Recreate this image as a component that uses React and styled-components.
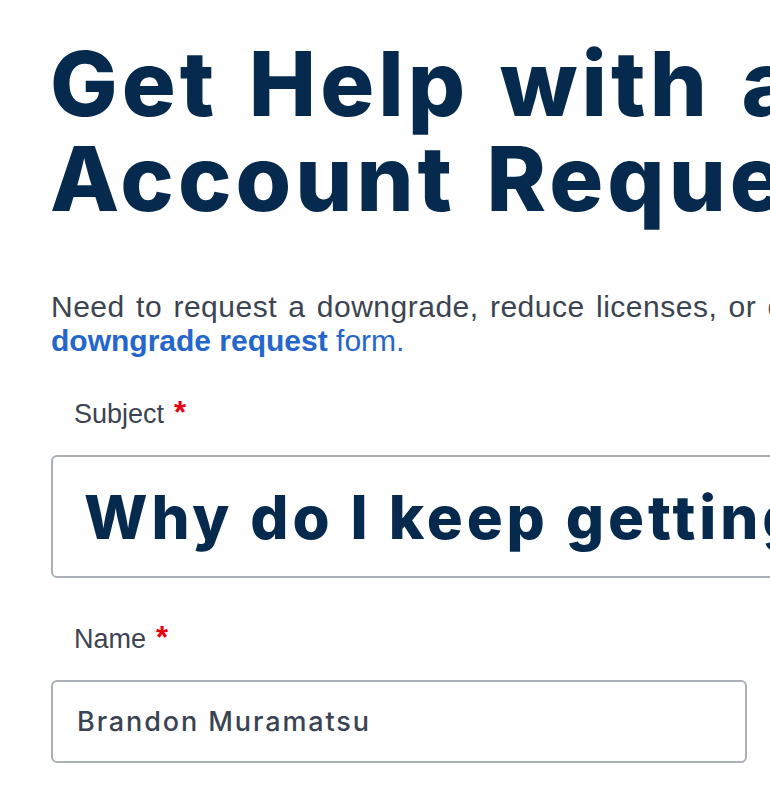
import React from "react";
import styled, { createGlobalStyle } from "styled-components";

const GlobalStyle = createGlobalStyle`
  html, body {
    margin: 0;
    padding: 0;
    background: #ffffff;
    overflow: hidden;
  }
`;

const Page = styled.div`
  width: 1300px;
  padding: 36px 0 0 50px;
  box-sizing: border-box;
`;

const Title = styled.h1`
  margin: 0;
  font-family: Inter, "Noto Sans", sans-serif;
  font-weight: 800;
  font-size: 90px;
  line-height: 95px;
  letter-spacing: 4px;
  word-spacing: 7px;
  color: #062a4d;
  white-space: nowrap;
`;

const Intro = styled.p`
  margin: 64px 0 0 1px;
  font-family: "Liberation Sans", Arial, sans-serif;
  font-size: 30px;
  line-height: 34px;
  color: #3c4451;
  white-space: nowrap;
`;

/* first line of the intro runs a little wider than the second in the original */
const StretchedLine = styled.span`
  letter-spacing: 0.5px;
  word-spacing: 2.5px;
`;

const Link = styled.a`
  color: #2566cc;
  text-decoration: none;
  font-weight: ${(p) => (p.$strong ? 700 : 400)};
`;

const Field = styled.div`
  display: flex;
  flex-direction: column;
  margin-top: ${(p) => p.$top}px;
`;

const Label = styled.label`
  padding-left: 24px;
  font-family: "Liberation Sans", Arial, sans-serif;
  font-size: 27px;
  line-height: 30px;
  color: #3c4451;
`;

const Required = styled.span`
  color: #e8000d;
  margin-left: 10px;
  font-size: 31px;
  font-weight: 700;
`;

const Input = styled.input`
  box-sizing: border-box;
  margin-top: ${(p) => p.$gap}px;
  margin-left: 1px;
  width: ${(p) => p.$width}px;
  height: ${(p) => p.$height}px;
  padding: 0 ${(p) => p.$pad}px;
  border: 2px solid #aaaeb5;
  border-radius: 6px;
  background: #ffffff;
  outline: none;
  font-family: Inter, "Noto Sans", sans-serif;
  font-weight: ${(p) => p.$weight};
  font-size: ${(p) => p.$size}px;
  letter-spacing: ${(p) => p.$track}px;
  color: ${(p) => p.$color};
`;

export default function App() {
  return (
    <>
      <GlobalStyle />
      <Page>
        <Title>
          Get Help with an
          <br />
          Account Request
        </Title>
        <Intro>
          <StretchedLine>
            Need to request a downgrade, reduce licenses, or cancel your account? Please use our
          </StretchedLine>
          <br />
          <Link href="#" $strong>
            downgrade request
          </Link>{" "}
          <Link href="#">form.</Link>
        </Intro>
        <Field $top={40}>
          <Label>
            Subject<Required>*</Required>
          </Label>
          <Input
            readOnly
            value="Why do I keep getting charged?"
            $gap={26}
            $width={1100}
            $height={123}
            $pad={31}
            $weight={800}
            $size={60}
            $track={3.9}
            $color="#062a4d"
          />
        </Field>
        <Field $top={45}>
          <Label>
            Name<Required>*</Required>
          </Label>
          <Input
            readOnly
            value="Brandon Muramatsu"
            $gap={26}
            $width={696}
            $height={83}
            $pad={24}
            $weight={500}
            $size={27}
            $track={1.9}
            $color="#3a4352"
          />
        </Field>
      </Page>
    </>
  );
}
